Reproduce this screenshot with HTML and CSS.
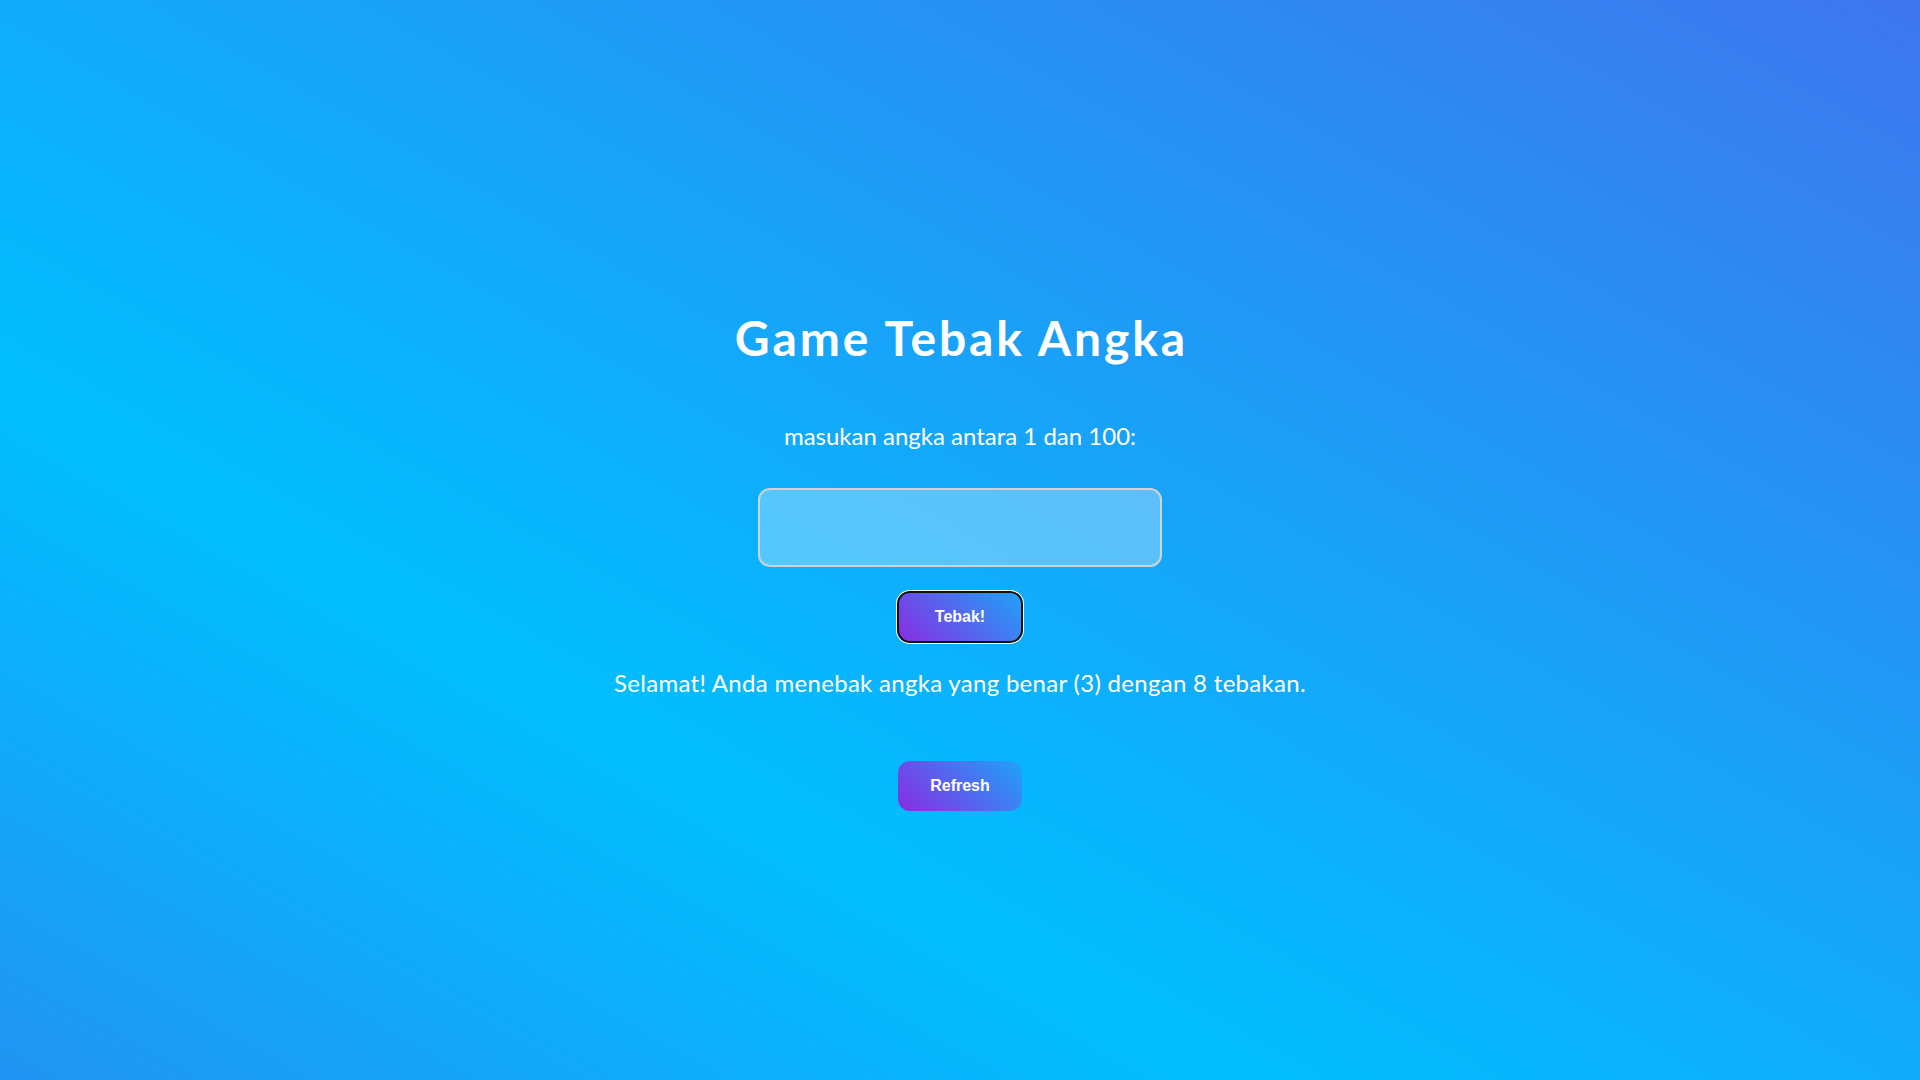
FILE: index.html
```html
<!DOCTYPE html>
<html lang="id">
<head>
<meta charset="UTF-8">
<title>Game Tebak Angka</title>
<link rel="stylesheet" href="styles.css">
</head>
<body>
  <main class="game">
    <h1 class="title">Game Tebak Angka</h1>
    <p class="prompt">masukan angka antara 1 dan 100:</p>
    <input class="guess-input" type="number" min="1" max="100">
    <button class="btn btn-guess">Tebak!</button>
    <p class="message">Selamat! Anda menebak angka yang benar (3) dengan 8 tebakan.</p>
    <button class="btn btn-refresh">Refresh</button>
  </main>
</body>
</html>
```
FILE: styles.css
```css
html, body {
  margin: 0;
  padding: 0;
}

body {
  min-height: 100vh;
  background: linear-gradient(to top right, #2194f3 0%, #00bfff 32%, #3e76ee 100%);
  font-family: Lato, "Open Sans", sans-serif;
  color: #ffffff;
}

.game {
  min-height: 100vh;
  box-sizing: border-box;
  padding-top: 306px;
  display: flex;
  flex-direction: column;
  align-items: center;
}

.title {
  margin: 0;
  font-size: 48px;
  line-height: 64px;
  font-weight: 700;
  letter-spacing: 2.9px;
  text-indent: 2.9px;
}

.prompt {
  margin: 50px 0 0;
  font-size: 24px;
  line-height: 32px;
}

.guess-input {
  margin-top: 36px;
  box-sizing: border-box;
  width: 404px;
  height: 79px;
  border: 2px solid #cfd3d8;
  border-radius: 12px;
  background: rgba(255, 255, 255, 0.3);
  font-family: inherit;
  font-size: 24px;
  color: #ffffff;
  text-align: center;
  outline: none;
}

.btn {
  box-sizing: border-box;
  width: 124px;
  height: 50px;
  border: none;
  border-radius: 12px;
  background: linear-gradient(45deg, #8a2be2, #1ea4fb);
  color: #ffffff;
  font-family: "Liberation Sans", Arial, sans-serif;
  font-weight: 700;
  font-size: 16px;
  cursor: pointer;
}

.btn-guess {
  margin-top: 25px;
  outline: 2px solid #101010;
  outline-offset: -1px;
  box-shadow: 0 0 0 2px #ffffff;
}

.message {
  margin: 25px 0 0;
  font-size: 24px;
  line-height: 32px;
  letter-spacing: 0.3px;
}

.btn-refresh {
  margin-top: 62px;
}
```
